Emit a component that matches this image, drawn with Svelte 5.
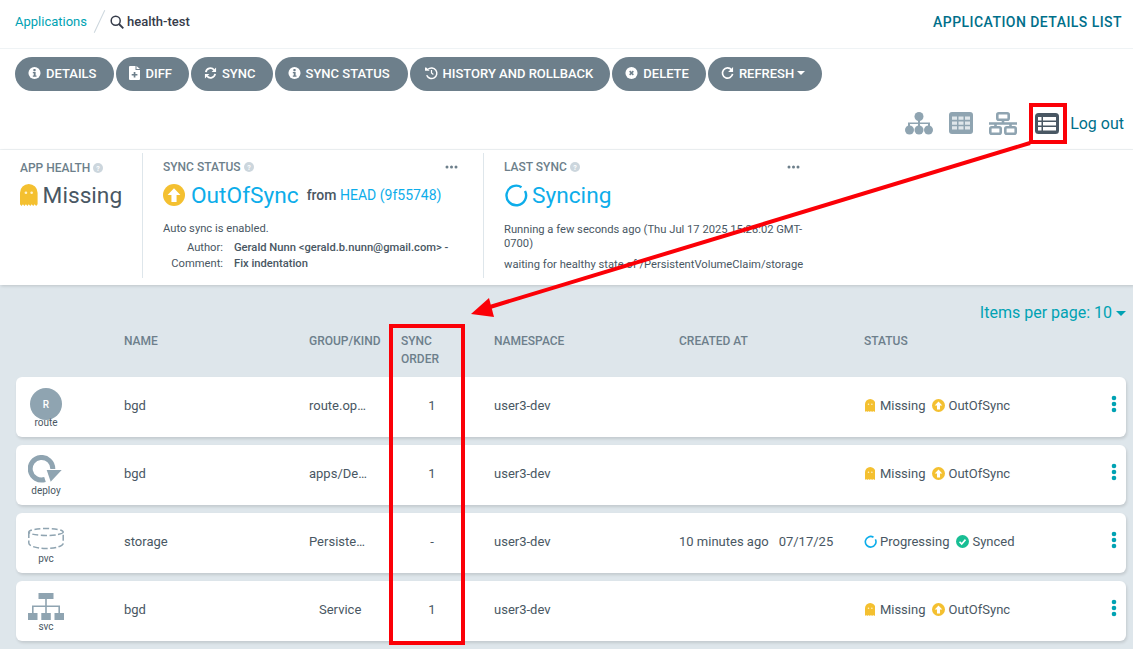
<script>
  const actions = [
    { label: "Details", icon: "info" },
    { label: "Diff", icon: "file" },
    { label: "Sync", icon: "sync" },
    { label: "Sync Status", icon: "info" },
    { label: "History and rollback", icon: "history" },
    { label: "Delete", icon: "times" },
    { label: "Refresh", icon: "redo", caret: true },
  ];

  const rows = [
    { kind: "route", name: "bgd", group: "route.op…", order: "1", ns: "user3-dev", created: "", health: "Missing", sync: "OutOfSync" },
    { kind: "deploy", name: "bgd", group: "apps/De…", order: "1", ns: "user3-dev", created: "", health: "Missing", sync: "OutOfSync" },
    { kind: "pvc", name: "storage", group: "Persiste…", order: "-", ns: "user3-dev", created: "10 minutes ago", date: "07/17/25", health: "Progressing", sync: "Synced" },
    { kind: "svc", name: "bgd", group: "Service", order: "1", ns: "user3-dev", created: "", health: "Missing", sync: "OutOfSync", center: true },
  ];

  const columns = ["Name", "Group/Kind", "Sync order", "Namespace", "Created at", "Status"];
</script>

{#snippet ghost(size)}
  <svg class="ghost" width={size * 0.8} height={size} viewBox="0 0 16 20">
    <path fill="#f4c030" d="M0 8a8 8 0 0 1 16 0v10.500l-1.300 1.500-1.400-1.500-1.300 1.500-1.300-1.500L9.300 20 8 18.500 6.700 20l-1.300-1.500L4 20l-1.300-1.500L1.400 20 0 18.500z" />
    <circle cx="5.400" cy="8" r="1.200" fill="#fff3cf" />
    <circle cx="10.600" cy="8" r="1.200" fill="#fff3cf" />
  </svg>
{/snippet}

{#snippet upArrow(size)}
  <svg class="fixed" width={size} height={size} viewBox="0 0 24 24">
    <circle cx="12" cy="12" r="12" fill="#f4c030" />
    <path fill="#fff" d="M12 4.500 19 12h-4.200v7.500H9.200V12H5z" />
  </svg>
{/snippet}

{#snippet spinner(size, width)}
  <svg class="fixed" width={size} height={size} viewBox="0 0 24 24">
    <path fill="none" stroke="#0dadea" stroke-width={width} d="M17.500 4.200A9.800 9.800 0 1 0 21 8" />
  </svg>
{/snippet}

{#snippet help(size)}
  <svg class="fixed" width={size} height={size} viewBox="0 0 12 12">
    <circle cx="6" cy="6" r="6" fill="#ccd6dd" />
    <text x="6" y="9" text-anchor="middle" font-size="8.500" font-weight="700" fill="#fff">?</text>
  </svg>
{/snippet}

{#snippet dots()}
  <svg class="dots" width="13" height="4" viewBox="0 0 13 4">
    <circle cx="2" cy="2" r="1.500" fill="#6d7f8b" />
    <circle cx="6.500" cy="2" r="1.500" fill="#6d7f8b" />
    <circle cx="11" cy="2" r="1.500" fill="#6d7f8b" />
  </svg>
{/snippet}

{#snippet actionIcon(name)}
  {#if name === "file"}
    <svg width="11" height="14" viewBox="0 0 11 14">
      <path fill="#fff" d="M1 0h5.500v4H11v9a1 1 0 0 1-1 1H1a1 1 0 0 1-1-1V1a1 1 0 0 1 1-1zM7.500 0 11 3H7.500z" />
      <path fill="#6d7f8b" d="M4.700 6h1.700v2h2v1.600h-2v2H4.700v-2h-2V8h2z" />
    </svg>
  {:else}
    <svg width="13" height="14" viewBox="0 0 14 14">
      {#if name === "info"}
        <circle cx="7" cy="7" r="6.500" fill="#fff" />
        <rect x="5.800" y="2.800" width="2.400" height="2.200" rx=".5" fill="#6d7f8b" />
        <path fill="#6d7f8b" d="M5.200 6h3v3.800h1V11H5.200V9.800h1V7.200h-1z" />
      {:else if name === "sync"}
        <path fill="none" stroke="#fff" stroke-width="1.900" d="M2 6a5 5 0 0 1 8.700-2.400M12 8a5 5 0 0 1-8.700 2.400" />
        <path fill="#fff" d="M13 1v4.800H8.200zM1 13V8.200h4.800z" />
      {:else if name === "history"}
        <path fill="none" stroke="#fff" stroke-width="1.600" d="M3.200 3A5.700 5.700 0 1 1 1.800 9.500" />
        <path fill="#fff" d="M0 1h1.300l3.700 3.700H0z" />
        <path fill="none" stroke="#fff" stroke-width="1.300" d="M7 3.800V7l2 1.500" />
      {:else if name === "times"}
        <circle cx="7" cy="7" r="6.500" fill="#fff" />
        <path stroke="#6d7f8b" stroke-width="1.600" d="m5 5 4 4m0-4-4 4" />
      {:else}
        <path fill="none" stroke="#fff" stroke-width="1.800" d="M11.300 3.500A5.500 5.500 0 1 0 12.500 8" />
        <path fill="#fff" d="M13 .5v5.300H7.700z" />
      {/if}
    </svg>
  {/if}
{/snippet}

<div class="page">
  <header class="top">
    <nav class="crumbs">
      <span class="link">Applications</span>
      <span class="slash"></span>
      <svg width="14" height="14" viewBox="0 0 14 14">
        <circle cx="5.700" cy="5.700" r="4.500" fill="none" stroke="#363c4a" stroke-width="1.500" />
        <path stroke="#363c4a" stroke-width="1.900" d="m9 9 4.300 4.300" />
      </svg>
      <span class="crumb-name">health-test</span>
    </nav>
    <span class="view-title">APPLICATION DETAILS LIST</span>
  </header>

  <div class="toolbar">
    <div class="actions">
      {#each actions as a}
        <button class="action" class:history={a.icon === "history"}>
          {@render actionIcon(a.icon)}
          <span>{a.label}</span>
          {#if a.caret}<i class="caret"></i>{/if}
        </button>
      {/each}
    </div>
    <div class="views">
      <svg class="view" width="28" height="23" viewBox="0 0 28 23">
        <g fill="#8fa4b1">
          <circle cx="14" cy="4.500" r="4.500" />
          <circle cx="4.500" cy="18" r="4.500" />
          <circle cx="14" cy="18" r="4.500" />
          <circle cx="23.500" cy="18" r="4.500" />
          <path d="M13 7h2v3.500h10v4h-2V12H15v2.500h-2V12H5v2.500H3v-4h10z" />
        </g>
      </svg>
      <svg class="view" width="24" height="22" viewBox="0 0 24 22">
        <rect width="24" height="22" rx="3" fill="#8fa4b1" />
        <path fill="#dfe6ea" d="M3 4.500h5v3.300H3zm6.500 0h5v3.300h-5zm6.500 0h5v3.300h-5zM3 9.400h5v3.300H3zm6.500 0h5v3.300h-5zm6.500 0h5v3.300h-5zM3 14.300h5v3.300H3zm6.500 0h5v3.300h-5zm6.500 0h5v3.300h-5z" />
      </svg>
      <svg class="view" width="28" height="23" viewBox="0 0 28 23">
        <g fill="none" stroke="#8fa4b1" stroke-width="2.600">
          <rect x="8.300" y="1.300" width="11.400" height="6.400" rx="1.500" />
          <rect x="1.300" y="15.300" width="10.400" height="6.400" rx="1.500" />
          <rect x="16.300" y="15.300" width="10.400" height="6.400" rx="1.500" />
          <path d="M14 8v4M0 11.500h28M6.500 11.500V15M21.500 11.500V15" />
        </g>
      </svg>
      <svg class="view" width="24" height="21" viewBox="0 0 24 21">
        <rect width="24" height="21" rx="3.500" fill="#495763" />
        <path fill="#fff" d="M3 4h3.500v3.600H3zm5 0h13v3.600H8zM3 9h3.500v3.600H3zm5 0h13v3.600H8zM3 14h3.500v3.500H3zm5 0h13v3.500H8z" />
      </svg>
      <span class="logout">Log out</span>
    </div>
  </div>

  <section class="summary">
    <div class="panel health">
      <div class="panel-title">APP HEALTH {@render help(10)}</div>
      <div class="panel-main">
        {@render ghost(22)}
        <span class="big dark">Missing</span>
      </div>
    </div>
    <div class="panel sync">
      <div class="panel-title">SYNC STATUS {@render help(10)}{@render dots()}</div>
      <div class="panel-main">
        {@render upArrow(22)}
        <span class="big blue">OutOfSync</span>
        <span class="from">from <em>HEAD (9f55748)</em></span>
      </div>
      <p class="auto">Auto sync is enabled.</p>
      <dl>
        <dt>Author:</dt>
        <dd>Gerald Nunn &lt;gerald.b.nunn@gmail.com&gt; -</dd>
        <dt>Comment:</dt>
        <dd>Fix indentation</dd>
      </dl>
    </div>
    <div class="panel last">
      <div class="panel-title">LAST SYNC {@render help(10)}{@render dots()}</div>
      <div class="panel-main tight">
        {@render spinner(24, 2.400)}
        <span class="big blue">Syncing</span>
      </div>
      <p class="running">Running a few seconds ago (Thu Jul 17 2025 15:28:02 GMT-0700)</p>
      <p class="waiting">waiting for healthy state of /PersistentVolumeClaim/storage</p>
    </div>
  </section>

  <main class="content">
    <div class="per-page">Items per page: 10 <i class="caret teal"></i></div>
    <div class="grid head">
      <span></span>
      {#each columns as c}<span>{c}</span>{/each}
    </div>
    {#each rows as r}
      <div class="grid row">
        <div class="kind">
          <div class="kind-icon">
            {#if r.kind === "route"}
              <span class="route-badge">R</span>
            {:else}
              <svg width="36" height="33" viewBox="0 0 36 33">
                {#if r.kind === "deploy"}
                  <path fill="none" stroke="#8fa4b1" stroke-width="5" d="M17 24.500A11.300 11.300 0 1 1 24.800 14" />
                  <path fill="#8fa4b1" d="M18.700 15h15L22.700 26.700z" />
                {:else if r.kind === "pvc"}
                  <g fill="none" stroke="#8fa4b1" stroke-width="1.500" stroke-dasharray="6 2.500">
                    <ellipse cx="18" cy="9" rx="17.200" ry="3.500" />
                    <path d="M.8 9v11c0 3 7.700 5.500 17.200 5.500S35.200 23 35.200 20V9" />
                  </g>
                {:else}
                  <g fill="#8fa4b1">
                    <rect x="10.500" y="2" width="15" height="6" />
                    <rect x="0" y="22" width="9.500" height="7" />
                    <rect x="13.300" y="22" width="9.500" height="7" />
                    <rect x="26.500" y="22" width="9.500" height="7" />
                    <path d="M17.200 8h1.600v6.500H32V22h-1.600v-6H18.800v6h-1.600v-6H5.600v6H4v-7.500h13.200z" />
                  </g>
                {/if}
              </svg>
            {/if}
          </div>
          <span class="kind-label">{r.kind}</span>
        </div>
        <span>{r.name}</span>
        <span class:svc={r.center}>{r.group}</span>
        <span class="order">{r.order}</span>
        <span>{r.ns}</span>
        <span class="created">{r.created}{#if r.date}<span class="date">{r.date}</span>{/if}</span>
        <div class="status">
          {#if r.health === "Missing"}
            {@render ghost(13)}
          {:else}
            {@render spinner(13, 3)}
          {/if}
          <span>{r.health}</span>
          {#if r.sync === "OutOfSync"}
            <span class="sync-icon">{@render upArrow(13)}</span>
          {:else}
            <svg class="sync-icon" width="13" height="13" viewBox="0 0 24 24">
              <circle cx="12" cy="12" r="12" fill="#18be94" />
              <path fill="none" stroke="#fff" stroke-width="3" d="m6.500 12.500 4 4 7-8" />
            </svg>
          {/if}
          <span>{r.sync}</span>
          <svg class="menu" width="6" height="18" viewBox="0 0 6 18">
            <circle cx="3" cy="3" r="2.300" fill="#00a2b3" />
            <circle cx="3" cy="9" r="2.300" fill="#00a2b3" />
            <circle cx="3" cy="15" r="2.300" fill="#00a2b3" />
          </svg>
        </div>
      </div>
    {/each}
  </main>

  <svg class="markup" width="1133" height="649" viewBox="0 0 1133 649">
    <g fill="none" stroke="#fb0007" stroke-width="4">
      <rect x="1031" y="105" width="34" height="37" />
      <rect x="391" y="326" width="72" height="317" />
      <path d="M1030 143 490 307" />
    </g>
    <path fill="#fb0007" d="M471 314 489 298 494 317z" />
  </svg>
</div>

<style>
  :global(body) {
    margin: 0;
    background: #fff;
  }
  .page {
    position: relative;
    width: 1133px;
    height: 649px;
    overflow: hidden;
    font-family: Roboto, "Liberation Sans", sans-serif;
    font-size: 13px;
    color: #495763;
  }
  .top {
    display: flex;
    justify-content: space-between;
    align-items: center;
    box-sizing: border-box;
    height: 49px;
    padding: 0 11px 5px 15px;
    border-bottom: 1px solid #eff3f5;
  }
  .crumbs {
    display: flex;
    align-items: center;
    gap: 3px;
  }
  .link {
    color: #00a2b3;
  }
  .slash {
    width: 1px;
    height: 25px;
    margin: 0 7px 0 9px;
    background: #ccd6dd;
    transform: rotate(25deg);
  }
  .crumb-name {
    color: #363c4a;
    font-weight: 500;
  }
  .view-title {
    color: #006f8a;
    font-size: 14px;
    font-weight: 500;
    letter-spacing: 0.45px;
  }
  .toolbar {
    box-sizing: border-box;
    height: 101px;
    padding: 8px 9px 0 15px;
    border-bottom: 1px solid #eff3f5;
  }
  .actions {
    display: flex;
    gap: 2px;
  }
  .action {
    display: flex;
    align-items: center;
    gap: 5px;
    height: 34px;
    padding: 0 17px 2px 13px;
    border: 0;
    border-radius: 17px;
    background: #6d7f8b;
    color: #fff;
    font: 500 13px Roboto, sans-serif;
    text-transform: uppercase;
    white-space: nowrap;
  }
  .action:first-child,
  .action:nth-child(4) {
    padding-right: 18px;
  }
  .action.history {
    padding-left: 15px;
  }
  .caret {
    display: inline-block;
    width: 0;
    height: 0;
    margin-left: -2px;
    border: 4px solid transparent;
    border-top-color: #fff;
    border-bottom: 0;
  }
  .caret.teal {
    margin-left: 0;
    border-width: 5.5px 5.5px 0;
    border-top-color: #00a2b3;
    vertical-align: 2px;
  }
  .views {
    display: flex;
    justify-content: flex-end;
    align-items: center;
    height: 26px;
    margin-top: 19px;
  }
  .view {
    flex: none;
    margin-right: 16px;
  }
  .view:nth-child(3) {
    margin-right: 18px;
  }
  .view:nth-child(4) {
    margin-right: 11px;
  }
  .logout {
    color: #006f8a;
    font-size: 16px;
  }
  .fixed,
  .ghost {
    flex: none;
  }
  .summary {
    display: flex;
    box-sizing: border-box;
    height: 135px;
    padding-top: 3px;
    position: relative;
    box-shadow: 1px 1px 3px rgba(0, 0, 0, 0.15);
  }
  .panel {
    box-sizing: border-box;
    height: 125px;
    padding: 6px 20px 0;
    border-right: 1px solid #dee6eb;
  }
  .health {
    width: 143px;
  }
  .health .panel-main {
    gap: 5px;
  }
  .sync {
    width: 341px;
  }
  .last {
    width: 340px;
    border-right: 0;
  }
  .panel-title {
    display: flex;
    align-items: center;
    gap: 3px;
    height: 16px;
    color: #6d7f8b;
    font-size: 12px;
    font-weight: 500;
    white-space: nowrap;
  }
  .health .panel-title {
    margin-top: 1px;
    margin-bottom: -1px;
  }
  .dots {
    flex: none;
    margin-left: auto;
    margin-right: 5px;
  }
  .last .dots {
    margin-right: 4px;
  }
  .panel-main {
    display: flex;
    align-items: center;
    gap: 6px;
    height: 30px;
    margin-top: 5px;
  }
  .panel-main.tight {
    gap: 4px;
  }
  .big {
    font-size: 22.7px;
    font-weight: 400;
  }
  .dark {
    color: #495763;
  }
  .blue {
    color: #0dadea;
  }
  .from {
    margin-left: 2px;
    color: #495763;
    font-size: 14px;
    font-weight: 500;
    white-space: nowrap;
  }
  .from em {
    color: #0dadea;
    font-style: normal;
    font-weight: 400;
  }
  .auto,
  .running,
  .waiting {
    margin: 0;
    font-size: 11.2px;
    line-height: 14px;
  }
  .auto {
    margin-top: 12px;
  }
  .running {
    margin-top: 13px;
    width: 310px;
  }
  .waiting {
    margin-top: 7px;
    white-space: nowrap;
  }
  dl {
    display: grid;
    grid-template-columns: 60px 1fr;
    column-gap: 11px;
    row-gap: 2px;
    margin: 5px 0 0;
    font-size: 11.2px;
    line-height: 14px;
  }
  dt {
    text-align: right;
  }
  dd {
    margin: 0;
    font-weight: 500;
    white-space: nowrap;
  }
  .content {
    box-sizing: border-box;
    height: 364px;
    padding: 18px 7px 0 16px;
    background: #dee6eb;
  }
  .per-page {
    height: 20px;
    color: #00a2b3;
    font-size: 16px;
    line-height: 20px;
    text-align: right;
  }
  .grid {
    display: grid;
    grid-template-columns: 108px 185px 92px 93px 185px 185px 1fr;
    align-items: center;
  }
  .head {
    align-items: start;
    height: 45px;
    margin-top: 9px;
    color: #6d7f8b;
    font-size: 12px;
    font-weight: 500;
    line-height: 18px;
    text-transform: uppercase;
  }
  .head span:nth-child(4) {
    width: 40px;
  }
  .row {
    box-sizing: border-box;
    height: 60px;
    padding-bottom: 4px;
    margin-bottom: 8px;
    border-radius: 6px;
    background: #fff;
    box-shadow: 1px 2px 3px rgba(0, 0, 0, 0.12);
  }
  .kind {
    align-self: start;
    display: flex;
    flex-direction: column;
    align-items: center;
    width: 60px;
    margin-top: 10px;
  }
  .kind-icon {
    display: flex;
    justify-content: center;
    height: 33px;
  }
  .route-badge {
    display: flex;
    align-items: center;
    justify-content: center;
    width: 32px;
    height: 32px;
    margin-top: 1px;
    border-radius: 50%;
    background: #8fa4b1;
    color: #fff;
    font-size: 10px;
    font-weight: 500;
  }
  .kind-label {
    position: relative;
    font-size: 10px;
    line-height: 12px;
    margin-top: -3px;
  }
  .svc {
    margin-left: 10px;
  }
  .order {
    width: 62px;
    text-align: center;
  }
  .created {
    white-space: nowrap;
  }
  .date {
    margin-left: 10px;
  }
  .status {
    display: flex;
    align-items: center;
    gap: 3px;
    position: relative;
  }
  .status > .ghost {
    margin: 0 1.5px 0 1px;
  }
  .sync-icon {
    display: flex;
    flex: none;
    margin-left: 4px;
  }
  .menu {
    position: absolute;
    right: 9px;
    top: -3px;
  }
  .markup {
    position: absolute;
    left: 0;
    top: 0;
    pointer-events: none;
  }
</style>
